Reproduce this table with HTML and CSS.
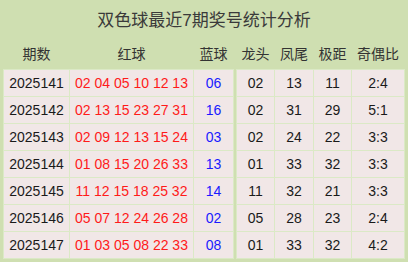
FILE: index.html
```html
<!DOCTYPE html>
<html lang="zh">
<head>
<meta charset="utf-8">
<link rel="stylesheet" href="styles.css">
</head>
<body>
<div class="board">
  <div class="title">双色球最近7期奖号统计分析</div>
  <div class="heads">
    <div class="grid left head">
      <div>期数</div><div>红球</div><div>蓝球</div>
    </div>
    <div class="grid right head">
      <div>龙头</div><div>凤尾</div><div>极距</div><div>奇偶比</div>
    </div>
  </div>
  <div class="body">
    <div class="grid left lines">
      <div>2025141</div><div class="red">02 04 05 10 12 13</div><div class="blue">06</div>
      <div>2025142</div><div class="red">02 13 15 23 27 31</div><div class="blue">16</div>
      <div>2025143</div><div class="red">02 09 12 13 15 24</div><div class="blue">03</div>
      <div>2025144</div><div class="red">01 08 15 20 26 33</div><div class="blue">13</div>
      <div>2025145</div><div class="red">11 12 15 18 25 32</div><div class="blue">14</div>
      <div>2025146</div><div class="red">05 07 12 24 26 28</div><div class="blue">02</div>
      <div>2025147</div><div class="red">01 03 05 08 22 33</div><div class="blue">08</div>
    </div>
    <div class="grid right lines">
      <div>02</div><div>13</div><div>11</div><div>2:4</div>
      <div>02</div><div>31</div><div>29</div><div>5:1</div>
      <div>02</div><div>24</div><div>22</div><div>3:3</div>
      <div>01</div><div>33</div><div>32</div><div>3:3</div>
      <div>11</div><div>32</div><div>21</div><div>3:3</div>
      <div>05</div><div>28</div><div>23</div><div>2:4</div>
      <div>01</div><div>33</div><div>32</div><div>4:2</div>
    </div>
  </div>
</div>
</body>
</html>
```

FILE: styles.css
```css
html, body {
  margin: 0;
  padding: 0;
  background: #cfdfb1;
}
body {
  font-family: "Liberation Sans", "Noto Sans CJK SC", sans-serif;
  color: #222;
}
.board {
  width: 408px;
  height: 262px;
  box-sizing: border-box;
  padding: 0 3px 3px 3px;
}
.title {
  height: 40px;
  line-height: 41px;
  text-align: center;
  font-size: 17px;
  color: #3a3a3a;
}
.heads, .body {
  display: flex;
  gap: 1px;
}
.grid {
  display: grid;
  gap: 1px;
  padding: 1px;
}
.left {
  grid-template-columns: 65px 123px 39px;
}
.right {
  grid-template-columns: 37px 38px 37px 52px;
}
.head {
  height: 29px;
  padding-top: 0;
  padding-bottom: 0;
}
.head div {
  font-size: 14px;
  line-height: 29px;
  text-align: center;
  color: #333;
}
.lines {
  background: #dbe9c6;
  grid-auto-rows: 26px;
}
.lines div {
  background: #f1e7e7;
  font-size: 14px;
  line-height: 26px;
  text-align: center;
  color: #1a1a1a;
}
.lines .red {
  color: #ff1a1a;
}
.lines .blue {
  color: #1a1aff;
}
.body .right {
  margin-left: 1px;
}
.heads .right {
  margin-left: 1px;
}
```
